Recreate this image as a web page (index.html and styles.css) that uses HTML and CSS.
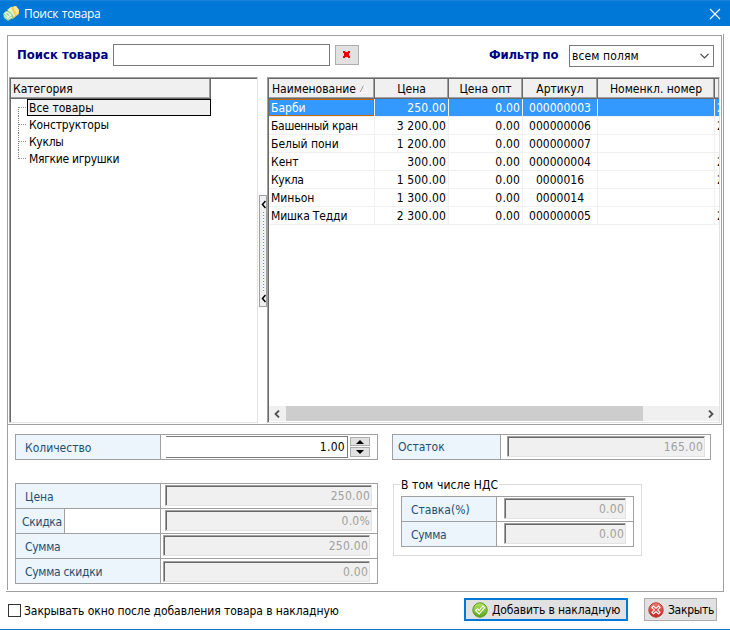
FILE: index.html
```html
<!DOCTYPE html>
<html lang="ru">
<head>
<meta charset="utf-8">
<title>Поиск товара</title>
<link rel="stylesheet" href="styles.css">
</head>
<body>
<div class="window">
  <header class="titlebar">
    <svg class="app-icon" width="16" height="16" viewBox="0 0 16 16">
      <path d="M5 5 8 1 13 0 16 4 16 8 11 12 9 13 5 10z" fill="#efbd45"/>
      <path d="M10 1 13 0 16 4 15 8 13 9z" fill="#fbe6a0"/>
      <path d="M4 4 8 1 10 2 13 8 11 11 8 7z" fill="#e2f4d6"/>
      <path d="M8 2 10 1 13 7 12 10z" fill="#f4cf4a"/>
      <path d="M0 8 3 5 6 5 10 9 10 12 5 15 1 12z" fill="#8fcf95"/>
      <path d="M1 7 4 5.500 9 9 5 12z" fill="#e8f7e0"/>
      <path d="M1 9.500 5 13 9 11" stroke="#f2fbee" fill="none"/>
      <path d="M3.500 7.500 6 9.500" stroke="#8cc98d" stroke-width="1.500"/>
    </svg>
    <span class="title">Поиск товара</span>
    <svg class="close" width="12" height="12" viewBox="0 0 12 12"><path d="M1 1 11 11M11 1 1 11" stroke="#fff" stroke-width="1.1" fill="none"/></svg>
  </header>
  <main class="panel">
    <section class="browser">
      <div class="search">
        <span class="heading find">Поиск товара</span>
        <div class="query"></div>
        <div class="clear"><svg width="7" height="7" viewBox="0 0 7 7"><path d="M0 0H2V1H5V0H7V2H6V5H7V7H5V6H2V7H0V5H1V2H0z" fill="#f00000"/></svg></div>
        <span class="heading filter">Фильтр по</span>
        <div class="combo"><span>всем полям</span><svg width="9" height="6" viewBox="0 0 9 6"><path d="M.5.8 4.500 4.800 8.500.8" stroke="#444" stroke-width="1.200" fill="none"/></svg></div>
      </div>
      <div class="lists">
        <div class="tree">
          <div class="tree-head">Категория</div>
          <div class="node selected"><i></i><span>Все товары</span></div>
          <div class="node"><i></i><span class="snug">Конструкторы</span></div>
          <div class="node"><i></i><span class="tight">Куклы</span></div>
          <div class="node last"><i></i><span class="tight">Мягкие игрушки</span></div>
        </div>
        <div class="splitter">
          <svg width="5" height="9" viewBox="0 0 5 9"><path d="M4.500 1 1.500 4.500 4.500 8" stroke="#000" stroke-width="1.500" fill="none"/></svg>
          <b></b>
          <svg width="5" height="9" viewBox="0 0 5 9"><path d="M4.500 1 1.500 4.500 4.500 8" stroke="#000" stroke-width="1.500" fill="none"/></svg>
        </div>
        <div class="grid">
          <div class="row head"><div class="name">Наименование<svg width="8" height="8" viewBox="0 0 8 8"><path d="M0 7.500 3.500.5" stroke="#a0a0a0" fill="none"/><path d="M4 .5 7.500 7.500H0" stroke="#fff" fill="none"/></svg></div><div>Цена</div><div>Цена опт</div><div>Артикул</div><div>Номенкл. номер</div><div></div></div>
          <div class="row active"><div>Барби</div><div>250.00</div><div>0.00</div><div>000000003</div><div></div><div>2</div></div>
          <div class="row"><div class="tight">Башенный кран</div><div>3 200.00</div><div>0.00</div><div>000000006</div><div></div><div>2</div></div>
          <div class="row"><div>Белый пони</div><div>1 200.00</div><div>0.00</div><div>000000007</div><div></div><div></div></div>
          <div class="row"><div>Кент</div><div>300.00</div><div>0.00</div><div>000000004</div><div></div><div>2</div></div>
          <div class="row"><div class="tight">Кукла</div><div>1 500.00</div><div>0.00</div><div>0000016</div><div></div><div>2</div></div>
          <div class="row"><div>Миньон</div><div>1 300.00</div><div>0.00</div><div>0000014</div><div></div><div></div></div>
          <div class="row"><div class="snug">Мишка Тедди</div><div>2 300.00</div><div>0.00</div><div>000000005</div><div></div><div>2</div></div>
          <div class="scrollbar">
            <svg width="6" height="8" viewBox="0 0 6 8"><path d="M5 .5 1.500 4 5 7.500" stroke="#505050" stroke-width="1.800" fill="none"/></svg>
            <div class="thumb"></div>
            <svg width="6" height="8" viewBox="0 0 6 8"><path d="M1 .5 4.500 4 1 7.500" stroke="#505050" stroke-width="1.800" fill="none"/></svg>
          </div>
        </div>
      </div>
    </section>
    <section class="details">
      <div class="left">
        <div class="form">
          <div class="line"><label>Количество</label><div class="qty">1.00</div>
            <div class="spin"><div><svg width="8" height="4"><path d="M0 4 4 0 8 4z"/></svg></div><div><svg width="8" height="4"><path d="M0 0 4 4 8 0z"/></svg></div></div>
          </div>
        </div>
        <div class="form prices">
          <div class="line"><label>Цена</label><div class="field">250.00</div></div>
          <div class="line"><label class="short tight">Скидка</label><div class="rest"></div><div class="field">0.0%</div></div>
          <div class="line"><label class="tight">Сумма</label><div class="field shifted">250.00</div></div>
          <div class="line"><label class="tight">Сумма скидки</label><div class="field shifted low">0.00</div></div>
        </div>
      </div>
      <div class="right">
        <div class="form stock"><div class="line"><label>Остаток</label><div class="field">165.00</div></div></div>
        <div class="vat">
          <span class="legend">В том числе НДС</span>
          <div class="form">
            <div class="line"><label>Ставка(%)</label><div class="field">0.00</div></div>
            <div class="line"><label class="tight">Сумма</label><div class="field">0.00</div></div>
          </div>
        </div>
      </div>
    </section>
  </main>
  <footer class="footer">
    <div class="check"></div><span class="check-label">Закрывать окно после добавления товара в накладную</span>
    <div class="btn primary">
      <svg width="16" height="16" viewBox="0 0 16 16"><defs><linearGradient id="g" x2="0" y2="1"><stop stop-color="#b5e35c"/><stop offset="1" stop-color="#59a51d"/></linearGradient></defs><circle cx="8" cy="8" r="7.200" fill="url(#g)" stroke="#5b9824"/><path d="M3.500 8.500 5.300 6.700 7 8.500 10.800 4 12.700 5.500 7.200 12z" fill="#8bc93b" stroke="#fff" stroke-width="1.100"/></svg>
      <span class="snug">Добавить в накладную</span></div>
    <div class="btn cancel">
      <svg width="16" height="16" viewBox="0 0 16 16"><defs><linearGradient id="r" x2="0" y2="1"><stop stop-color="#ee8177"/><stop offset="1" stop-color="#c81d1d"/></linearGradient></defs><circle cx="8" cy="8" r="7.200" fill="url(#r)" stroke="#b73a34"/><path d="M4 5.500 5.500 4 8 6.300 10.500 4 12 5.500 9.700 8 12 10.500 10.500 12 8 9.700 5.500 12 4 10.500 6.300 8z" fill="#d9534c" stroke="#fff" stroke-width="1.100"/></svg>
      <span class="tight">Закрыть</span></div>
  </footer>
</div>
</body>
</html>
```
FILE: styles.css
```css
* { box-sizing: border-box; }
body { margin: 0; background: #fff; color: #000; font: 12px/16px "DejaVu Sans Condensed", "DejaVu Sans", sans-serif; }
svg { display: block; flex: none; }
.snug { letter-spacing: -0.15px; }
.tight { letter-spacing: -0.3px; }
.window { width: 730px; height: 630px; display: flex; flex-direction: column; border-bottom: 1px solid #1a78c8; overflow: hidden; white-space: nowrap; }
.titlebar { height: 26px; flex: none; display: flex; align-items: center; background: #0078d7; border-top: 1px solid #1883d9; padding: 0 9px 0 3px; color: #fff; }
.title { font: 12px/16px "Open Sans", sans-serif; letter-spacing: -0.3px; word-spacing: 1px; margin-left: 5px; flex: 1; }

.panel { margin: 8px 6px 0 6px; height: 558px; flex: none; border-right: 1px solid #a0a0a0; border-bottom: 1px solid #a0a0a0; padding: 1px 1px 0 1px; }
.browser { height: 390px; border: 1px solid #a0a0a0; display: flex; flex-direction: column; padding: 0 1px 1px; }
.search { height: 41px; flex: none; display: flex; align-items: flex-start; padding: 8px 6px 0 8px; }
.heading { font-weight: bold; font-size: 13px; line-height: 22px; color: #000080; }
.find { width: 96px; }
.query { width: 217px; height: 22px; border: 1px solid #7a7a7a; }
.clear { width: 24px; height: 20px; margin: 1px 0 0 5px; border: 1px solid #adadad; background: #e1e1e1; display: flex; justify-content: center; padding: 5px 1px 0 0; }
.filter { margin-left: 130px; width: 80px; letter-spacing: -0.2px; }
.combo { width: 145px; height: 22px; margin-top: 1px; border: 1px solid #7a7a7a; display: flex; justify-content: space-between; align-items: center; padding: 0 4px 0 2px; letter-spacing: 0.1px; }

.lists { height: 346px; display: flex; }
.tree { width: 249px; border: solid; border-width: 1px; border-color: #a0a0a0 #e3e3e3 #e3e3e3 #a0a0a0; box-shadow: inset 1px 1px #696969; padding: 1px 0 0 1px; }
.tree-head { width: 200px; height: 20px; padding-left: 2px; line-height: 21px; background: #f0f0f0; border: solid #696969; border-width: 0 1px 1px 0; box-shadow: inset -1px -1px #a0a0a0; }
.node { display: flex; height: 17px; line-height: 19px; }
.node i { width: 9px; margin-left: 7px; border-left: 1px dotted #808080; background: linear-gradient(90deg, #909090 50%, transparent 0) 0 8px / 2px 1px repeat-x; }
.node.last i { height: 9px; }
.node.selected i { height: 9px; margin-top: 8px; background-position: 0 0; }
.node span { padding-left: 2px; }
.node.selected span { border: 1px solid #000; background: #f0f0f0; width: 184px; line-height: 17px; padding-left: 1px; }
.splitter { width: 8px; height: 112px; margin: 118px 0 0 1px; border: 1px solid #a0a0a0; background: #f0f0f0; display: flex; flex-direction: column; align-items: center; justify-content: space-between; padding: 4px 0 3px; }
.splitter b { width: 1px; height: 80px; background: repeating-linear-gradient(#4a94e8 0 1px, #fff 1px 3px); }

.grid { width: 453px; border: 1px solid; border-color: #a0a0a0 #e3e3e3 #e3e3e3 #a0a0a0; box-shadow: inset 1px 1px #696969; padding: 1px 0 1px 1px; display: flex; flex-direction: column; }
.row { display: grid; grid-template-columns: 106px 74px 74px 75px 117px 4px; height: 18px; line-height: 19px; flex: none; }
.row > div { border-right: 1px solid #f0f0f0; border-bottom: 1px solid #f0f0f0; padding: 0 2px; overflow: hidden; }
.row:not(.head) > div:nth-child(2), .row:not(.head) > div:nth-child(3) { text-align: right; letter-spacing: 0.15px; }
.row > div:nth-child(4) { text-align: center; }
.row > div:last-child { border-right: 0; }
.row.active > div { background: #3399ff; color: #fff; }
.row.active > div:first-child { box-shadow: inset 0 0 0 1px #cc6600; }
.row.head { height: 20px; line-height: 21px; }
.row.head > div { background: #f0f0f0; text-align: center; border-color: #696969; box-shadow: inset -1px -1px #a0a0a0; }
.row.head .name { display: flex; align-items: flex-start; justify-content: space-between; padding: 0 6px 0 3px; }
.name svg { margin-top: 6px; }
.scrollbar { height: 15px; margin-top: auto; background: #f0f0f0; display: flex; align-items: center; padding: 0 5px; }
.thumb { height: 15px; width: 357px; margin: 0 auto 0 6px; background: #cdcdcd; }

.details { display: flex; gap: 14px; height: 165px; padding: 9px 0 0 7px; border-left: 1px solid #a0a0a0; }
.left { width: 363px; }
.form { border: 1px solid #a0a0a0; }
.line { display: flex; height: 24px; }
.line + .line { border-top: 1px solid #a0a0a0; height: 25px; }
label { width: 145px; flex: none; background: #ecf4fc; color: #1f5070; border-right: 1px solid #a0a0a0; padding-left: 9px; line-height: 26px; }
.short { width: 49px; padding-left: 6px; }
.rest { width: 96px; border-right: 1px solid #a0a0a0; }
.prices { margin-top: 23px; }
.field { width: 207px; height: 21px; margin: 1px 0 0 4px; background: #f0f0f0; border: 1px solid; border-color: #a0a0a0 #e3e3e3 #e3e3e3 #a0a0a0; box-shadow: inset 1px 1px #696969; color: #a0a0a0; text-align: right; line-height: 20px; padding-right: 1px; letter-spacing: 0.25px; }
.shifted { margin-left: 2px; }
.low { margin-top: 2px; }
.qty { width: 182px; height: 22px; margin: 1px 0 0 5px; border: 1px solid #7a7a7a; border-left: 0; text-align: right; padding-right: 2px; line-height: 20px; letter-spacing: 0.3px; }
.spin { width: 20px; height: 20px; margin: 2px 0 0 2px; display: grid; grid-template-rows: 9px 10px; gap: 1px; }
.spin div { border: 1px solid #adadad; background: #e1e1e1; display: grid; place-items: center; }
.stock { width: 319px; }
.stock label { width: 108px; padding-left: 5px; line-height: 24px; }
.stock .field { width: 198px; margin-left: 6px; }
.vat { width: 249px; height: 72px; margin: 24px 0 0 1px; border: 1px solid #dcdcdc; padding: 0 7px; }
.legend { display: block; width: 99px; height: 16px; margin: -8px 0 0 -1px; padding-left: 1px; line-height: 17px; background: #fff; letter-spacing: 0.1px; }
.vat .form { width: 233px; margin-top: 3px; }
.vat label { width: 95px; }
.vat .field { width: 122px; margin-left: 7px; }

.footer { display: flex; align-items: flex-start; padding: 6px 0 0 8px; }
.check { width: 13px; height: 13px; margin-top: 6px; border: 1px solid #333; }
.check-label { width: 440px; margin: 5px 0 0 3px; letter-spacing: -0.08px; }
.btn { height: 23px; background: #e1e1e1; border: 1px solid #adadad; display: flex; align-items: center; gap: 4px; padding: 1px 4px 0 3px; }
.primary { width: 164px; border: 2px solid #0078d7; padding-left: 6px; }
.cancel { width: 73px; margin-left: 16px; }
```
